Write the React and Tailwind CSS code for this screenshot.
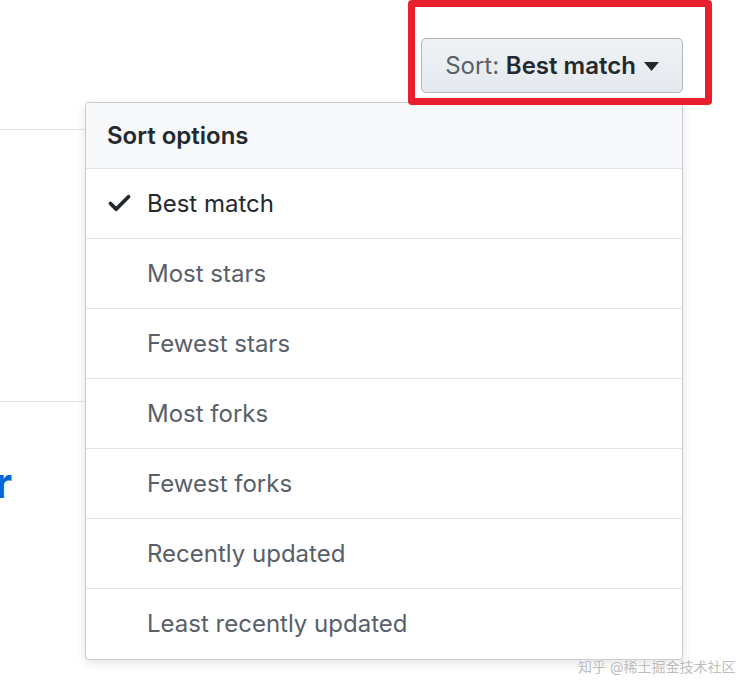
import { Check } from "lucide-react";

const options = [
  "Best match",
  "Most stars",
  "Fewest stars",
  "Most forks",
  "Fewest forks",
  "Recently updated",
  "Least recently updated",
];

const SortMenu = ({ selected }) => (
  <div className="absolute left-[85px] top-[102px] w-[598px] rounded-[4px] border border-[#c9cdd2] bg-white shadow-[0_3px_10px_rgba(27,31,35,0.12)] overflow-hidden">
    <div className="h-[66px] flex items-center px-[21px] bg-[#f6f8fa] border-b border-[#e1e4e8] text-[24px] font-semibold text-[#24292e]">
      Sort options
    </div>
    {options.map((opt, i) => (
      <div
        key={opt}
        className={`h-[70px] flex items-center border-[#e1e4e8] ${i < options.length - 1 ? "border-b" : ""}`}
      >
        <div className="w-[61px] pl-[20px] flex items-center">
          {opt === selected && <Check size={27} strokeWidth={3.4} className="text-[#24292e]" />}
        </div>
        <span className={`text-[24px] ${opt === selected ? "text-[#24292e]" : "text-[#586069]"}`}>{opt}</span>
      </div>
    ))}
  </div>
);

export default function App() {
  return (
    <div
      className="relative w-[752px] h-[698px] overflow-hidden bg-white"
      style={{ fontFamily: "Inter, 'Noto Sans', 'Noto Sans CJK SC', sans-serif" }}
    >
      {/* page behind the menu */}
      <div className="flex justify-end pt-[38px] pr-[69px]">
        <button className="h-[55px] w-[262px] flex items-center justify-center gap-[8px] rounded-[5px] border border-[#b1b5ba] bg-gradient-to-b from-[#eff3f6] to-[#e4e9ee] text-[24px]">
          <span className="text-[#586069]">
            Sort: <span className="font-semibold text-[#24292e]">Best match</span>
          </span>
          <svg width="15" height="9" viewBox="0 0 15 9" className="mt-[2px]">
            <path d="M0 0h15L7.5 9z" fill="#24292e" />
          </svg>
        </button>
      </div>
      <div className="mt-[36px] w-[600px] border-t border-[#e1e4e8]" />
      <div className="mt-[271px] w-[600px] border-t border-[#e1e4e8]" />
      <div className="mt-[56px] -ml-[5px] text-[42px] leading-[50px] font-bold text-[#0366d6]">r</div>

      <SortMenu selected="Best match" />

      {/* annotation */}
      <div className="absolute left-[408px] top-0 w-[304px] h-[105px] border-[7px] border-[#e8202e] rounded-[4px]" />

      {/* watermark */}
      <div className="absolute left-[578px] top-[656px] whitespace-nowrap text-[14px] text-[#bdbdbd] [text-shadow:0_0_2px_#fff]">
        知乎 @稀土掘金技术社区
      </div>
    </div>
  );
}
